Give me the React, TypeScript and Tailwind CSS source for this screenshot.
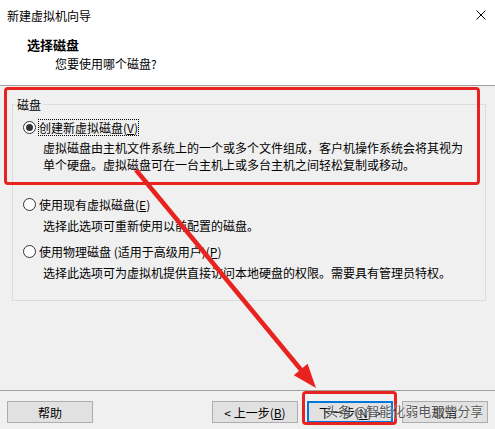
import React from "react";

const font = { fontFamily: '"Noto Sans CJK SC", "Noto Sans", sans-serif' };

function Radio({ checked }: { checked?: boolean }) {
  return (
    <span className="flex h-[13px] w-[13px] shrink-0 items-center justify-center rounded-full border border-[#333333] bg-white">
      {checked && <span className="h-[7px] w-[7px] rounded-full bg-[#333333]" />}
    </span>
  );
}

function Btn({ children, primary }: { children: React.ReactNode; primary?: boolean }) {
  return (
    <div
      className={
        "flex h-[22px] w-[86px] items-center justify-center bg-[#e1e1e1] text-[12px] leading-[17px] text-black " +
        (primary ? "border-2 border-[#0078d7]" : "border border-[#adadad]")
      }
    >
      {children}
    </div>
  );
}

export default function App() {
  return (
    <div
      className="relative flex h-[429px] w-[495px] flex-col overflow-hidden bg-[#f0f0f0] text-black"
      style={font}
    >
      {/* title bar */}
      <div className="flex h-[30px] items-center justify-between bg-white pl-[7px] pr-[9px]">
        <span className="text-[12px] leading-[17px]">新建虚拟机向导</span>
        <svg width="10" height="10" viewBox="0 0 10 10">
          <path d="M0.5 0.5 L9.5 9.5 M9.5 0.5 L0.5 9.5" stroke="#000" strokeWidth="1" />
        </svg>
      </div>
      {/* header */}
      <div className="h-[56px] border-b border-[#a0a0a0] bg-white pt-[6px]">
        <div className="pl-[27px] text-[13px] font-bold leading-[17px]">选择磁盘</div>
        <div className="mt-[2px] pl-[55px] text-[12px] leading-[17px]">您要使用哪个磁盘?</div>
      </div>
      {/* body */}
      <div className="flex-1">
        <fieldset className="ml-[12px] mr-[9px] mt-[10px] border border-[#dcdcdc] pb-[19px] text-[12px] leading-[17px]">
          <legend className="ml-[2px] px-[2px] leading-[17px]">磁盘</legend>
          <div className="mt-[6px] flex h-[17px] items-center pl-[10px]">
            <Radio checked />
            <span className="ml-[2px] border border-dotted border-black leading-[15px]">
              创建新虚拟磁盘(<span className="underline">V</span>)
            </span>
          </div>
          <div className="mt-[3px] pl-[30px]">
            <div>虚拟磁盘由主机文件系统上的一个或多个文件组成，客户机操作系统会将其视为</div>
            <div>单个硬盘。虚拟磁盘可在一台主机上或多台主机之间轻松复制或移动。</div>
          </div>
          <div className="mt-[23px] flex h-[17px] items-center pl-[10px]">
            <Radio />
            <span className="ml-[3px]">
              使用现有虚拟磁盘(<span className="underline">E</span>)
            </span>
          </div>
          <div className="mt-[4px] pl-[30px]">选择此选项可重新使用以前配置的磁盘。</div>
          <div className="mt-[9px] flex h-[17px] items-center pl-[10px]">
            <Radio />
            <span className="ml-[3px]">
              使用物理磁盘 (适用于高级用户)(<span className="underline">P</span>)
            </span>
          </div>
          <div className="mt-[4px] pl-[30px]">选择此选项可为虚拟机提供直接访问本地硬盘的权限。需要具有管理员特权。</div>
        </fieldset>
      </div>
      {/* footer */}
      <div className="h-[39px] border-t border-[#a0a0a0] pt-[10px]">
        <div className="flex items-center justify-between pl-[7px] pr-[7px]">
          <Btn>帮助</Btn>
          <div className="flex gap-[9px]">
            <Btn>
              &lt; 上一步(<span className="underline">B</span>)
            </Btn>
            <Btn primary>
              下一步(<span className="underline">N</span>) &gt;
            </Btn>
            <Btn>取消</Btn>
          </div>
        </div>
      </div>

      {/* annotations */}
      <div className="pointer-events-none absolute left-[4px] top-[87px] h-[98px] w-[476px] rounded-[4px] border-[3px] border-[#e8231f]" />
      <div className="pointer-events-none absolute left-[302px] top-[391px] h-[34px] w-[95px] rounded-[4px] border-[3px] border-[#e8231f]" />
      <svg className="pointer-events-none absolute left-0 top-0" width="495" height="429" viewBox="0 0 495 429">
        <line x1="136" y1="170" x2="302" y2="371" stroke="#e8231f" strokeWidth="4.5" />
        <polygon points="316,388 293.8,375.2 307.6,363.8" fill="#e8231f" />
      </svg>
      <div className="pointer-events-none absolute left-[325px] top-[402px] text-[13px] leading-[17px] text-[#333333] opacity-80 [text-shadow:0_0_2px_#ffffff,0_0_1px_#ffffff]">
        头条 @智能化弱电那些分享
      </div>
    </div>
  );
}
